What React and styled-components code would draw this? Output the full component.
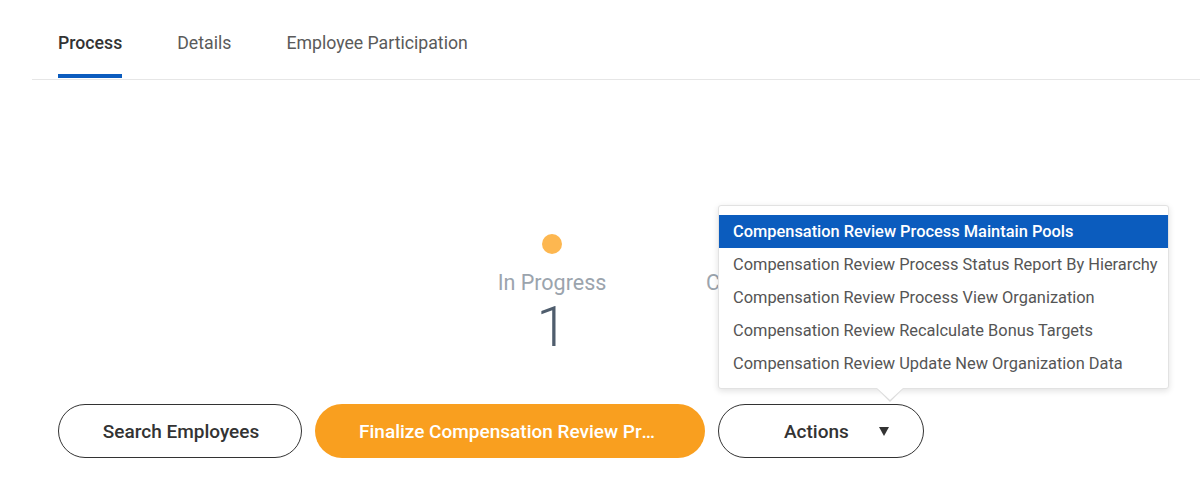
import React from "react";
import styled, { createGlobalStyle } from "styled-components";

const Global = createGlobalStyle`
  html, body { margin: 0; padding: 0; background: #fff; }
  body { font-family: Roboto, "Liberation Sans", Arial, sans-serif; }
  * { box-sizing: border-box; }
`;

const Page = styled.div`
  width: 1200px;
  height: 479px;
  overflow: hidden;
  display: flex;
  flex-direction: column;
`;

const TabBar = styled.nav`
  margin-left: 32px;
  padding-left: 26px;
  height: 80px;
  border-bottom: 1px solid #e6e6e6;
  display: flex;
  align-items: stretch;
  gap: 55px;
`;

const Tab = styled.div`
  display: flex;
  align-items: flex-start;
  padding-top: 33px;
  font-size: 17.7px;
  line-height: 21px;
  font-weight: ${(p) => (p.$active ? 500 : 400)};
  color: ${(p) => (p.$active ? "#333" : "#5a5a5a")};
  border-bottom: 4px solid ${(p) => (p.$active ? "#0b5cbe" : "transparent")};
  margin-bottom: 1px;
`;

const Stats = styled.section`
  margin-top: 154px;
  padding-left: 452px;
  display: flex;
`;

const Stat = styled.div`
  width: 200px;
  display: flex;
  flex-direction: column;
  align-items: center;
`;

const Dot = styled.span`
  width: 20px;
  height: 20px;
  border-radius: 50%;
  background: ${(p) => p.$color};
`;

const StatLabel = styled.div`
  margin-top: 17px;
  font-size: 21.5px;
  line-height: 24px;
  color: #9ba4ad;
`;

const StatValue = styled.div`
  margin-top: 4px;
  font-size: 56px;
  line-height: 56px;
  font-weight: 300;
  color: #4f5d6d;
`;

const ButtonRow = styled.div`
  margin-top: 49px;
  padding-left: 58px;
  display: flex;
  gap: 13px;
`;

const PillButton = styled.button`
  height: 54px;
  width: ${(p) => p.$width}px;
  border-radius: 27px;
  font-family: inherit;
  font-size: 19px;
  font-weight: 500;
  white-space: nowrap;
  overflow: hidden;
  text-overflow: ellipsis;
  cursor: pointer;
  border: ${(p) => (p.$primary ? "none" : "1.5px solid #333")};
  background: ${(p) => (p.$primary ? "#f99f1f" : "#fff")};
  color: ${(p) => (p.$primary ? "#fff" : "#333")};
  padding: 0 ${(p) => (p.$primary ? 46 : 40)}px 0 ${(p) => (p.$primary ? 44 : 42)}px;
`;

const ActionsWrap = styled.div`
  position: relative;
`;

const ActionsButton = styled.button`
  height: 54px;
  width: 206px;
  border-radius: 27px;
  border: 1.5px solid #333;
  background: #fff;
  color: #333;
  font-family: inherit;
  font-size: 19px;
  font-weight: 500;
  display: flex;
  align-items: center;
  gap: 30px;
  padding: 0 33px 0 65px;
  cursor: pointer;
`;

const Caret = styled.span`
  width: 0;
  height: 0;
  border-left: 5.5px solid transparent;
  border-right: 5.5px solid transparent;
  border-top: 9px solid #333;
  margin-top: 1px;
`;

const Menu = styled.ul`
  position: absolute;
  left: 0;
  bottom: calc(100% + 15px);
  width: 451px;
  margin: 0;
  padding: 9px 0 8px;
  list-style: none;
  background: #fff;
  border: 1px solid #e2e2e2;
  border-radius: 3px;
  box-shadow: 0 2px 6px rgba(0, 0, 0, 0.12);
  z-index: 10;

  &::after,
  &::before {
    content: "";
    position: absolute;
    left: 158px;
    width: 0;
    height: 0;
    border-left: 13px solid transparent;
    border-right: 13px solid transparent;
  }
  &::before {
    bottom: -14px;
    border-top: 13px solid #dcdcdc;
  }
  &::after {
    bottom: -12px;
    border-top: 12px solid #fff;
  }
`;

const MenuItem = styled.li`
  height: 33px;
  display: flex;
  align-items: center;
  padding-left: 14px;
  font-size: 16.4px;
  font-weight: ${(p) => (p.$selected ? 500 : 400)};
  color: ${(p) => (p.$selected ? "#fff" : "#555")};
  background: ${(p) => (p.$selected ? "#0b5cbe" : "transparent")};
  white-space: nowrap;
`;

const tabs = ["Process", "Details", "Employee Participation"];

const menuItems = [
  "Compensation Review Process Maintain Pools",
  "Compensation Review Process Status Report By Hierarchy",
  "Compensation Review Process View Organization",
  "Compensation Review Recalculate Bonus Targets",
  "Compensation Review Update New Organization Data",
];

export default function App() {
  return (
    <Page>
      <Global />
      <TabBar>
        {tabs.map((t, i) => (
          <Tab key={t} $active={i === 0}>
            {t}
          </Tab>
        ))}
      </TabBar>

      <Stats>
        <Stat>
          <Dot $color="#fdb750" />
          <StatLabel>In Progress</StatLabel>
          <StatValue>1</StatValue>
        </Stat>
        <Stat>
          <Dot $color="#4caf50" />
          <StatLabel>Complete</StatLabel>
          <StatValue>0</StatValue>
        </Stat>
      </Stats>

      <ButtonRow>
        <PillButton $width={244}>Search Employees</PillButton>
        <PillButton $width={390} $primary>
          Finalize Compensation Review Process
        </PillButton>
        <ActionsWrap>
          <Menu>
            {menuItems.map((m, i) => (
              <MenuItem key={m} $selected={i === 0}>
                {m}
              </MenuItem>
            ))}
          </Menu>
          <ActionsButton>
            Actions
            <Caret />
          </ActionsButton>
        </ActionsWrap>
      </ButtonRow>
    </Page>
  );
}
